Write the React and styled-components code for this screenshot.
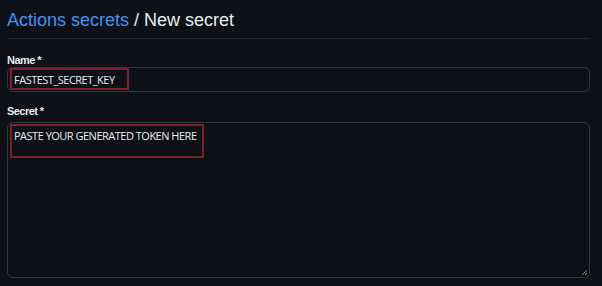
import React from 'react'
import styled, { createGlobalStyle } from 'styled-components'

const GlobalStyle = createGlobalStyle`
  html, body {
    margin: 0;
    padding: 0;
    background: #0d1117;
  }
  body {
    font-family: "Liberation Sans", Arial, sans-serif;
    color: #e6edf3;
  }
`

const Page = styled.div`
  width: 602px;
  height: 286px;
  box-sizing: border-box;
  padding: 9px 12px 0 7px;
  background: #0d1117;
  overflow: hidden;
`

const Header = styled.div`
  padding-bottom: 7px;
  border-bottom: 1px solid #21262d;
  margin-bottom: 14px;
`

const Title = styled.h1`
  margin: 0;
  font-size: 18px;
  font-weight: 400;
  line-height: 22px;
  color: #e6edf3;
`

const Crumb = styled.a`
  color: #4493f8;
  text-decoration: none;
`

const Group = styled.div`
  display: flex;
  flex-direction: column;
  margin-bottom: ${({ $gap }) => $gap || 0}px;
`

const Label = styled.label`
  font-size: 11px;
  font-weight: 700;
  line-height: 14px;
  letter-spacing: -0.55px;
  margin-bottom: ${({ $gap }) => $gap || 0}px;
  color: #e6edf3;
`

const Field = styled.div`
  box-sizing: border-box;
  height: ${({ $height }) => $height}px;
  padding: 0 2px;
  padding-top: ${({ $top }) => $top || 0}px;
  border: 1px solid #30363d;
  border-radius: 6px;
  background: #0d1117;
  position: relative;
`

const Highlight = styled.span`
  display: block;
  box-sizing: border-box;
  width: ${({ $width }) => $width}px;
  height: ${({ $height }) => $height}px;
  padding: 3px 2px 0;
  border: 2px solid #7a2026;
  font-family: "Open Sans", "Noto Sans", sans-serif;
  font-size: 11px;
  line-height: 14px;
  letter-spacing: -0.5px;
  white-space: nowrap;
  color: #e6edf3;
`

const Grip = styled.svg`
  position: absolute;
  right: 1px;
  bottom: 1px;
`

export default function App() {
  return (
    <>
      <GlobalStyle />
      <Page>
        <Header>
          <Title>
            <Crumb href="#">Actions secrets</Crumb> / New secret
          </Title>
        </Header>
        <Group $gap={12}>
          <Label>Name *</Label>
          <Field $height={25}>
            <Highlight $width={119} $height={22}>FASTEST_SECRET_KEY</Highlight>
          </Field>
        </Group>
        <Group>
          <Label $gap={4}>Secret *</Label>
          <Field $height={156} $top={1}>
            <Highlight $width={194} $height={34}>PASTE YOUR GENERATED TOKEN HERE</Highlight>
            <Grip width="7" height="7" viewBox="0 0 7 7">
              <path d="M6 1L1 6M6 4L4 6" stroke="#8b949e" strokeWidth="1" />
            </Grip>
          </Field>
        </Group>
      </Page>
    </>
  )
}
